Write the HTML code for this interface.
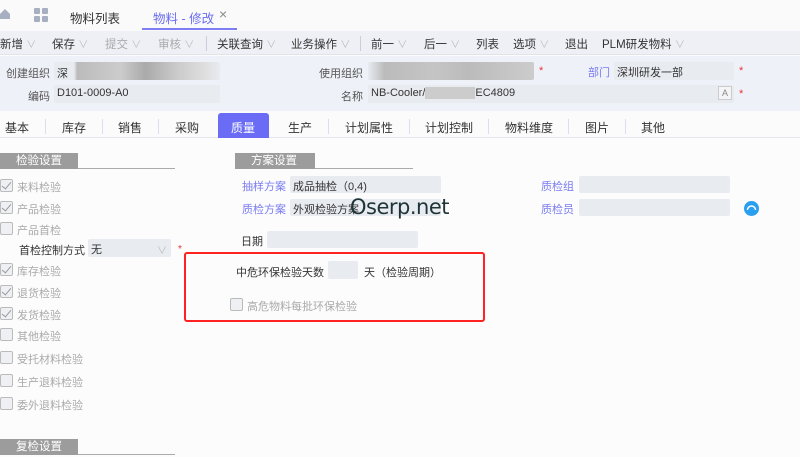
<!DOCTYPE html>
<html><head><meta charset="utf-8"><style>
*{margin:0;padding:0;box-sizing:border-box}
body{width:800px;height:457px;overflow:hidden;background:#fcfcfd;font-family:"Liberation Sans","Noto Sans CJK SC",sans-serif;font-size:11px;color:#333;position:relative}
.a{position:absolute;white-space:nowrap}
.inp{position:absolute;background:#e8ebf0;border-radius:2px}
.ck{position:absolute;width:13px;height:13px;border:1px solid #bbb;border-radius:2px;background:#eef0f4}
.ck.on::after{content:"";position:absolute;left:3px;top:0px;width:4px;height:8px;border:solid #999;border-width:0 1.5px 1.5px 0;transform:rotate(40deg)}
.cl{color:#aaa}
.dv{color:#bbb;font-size:10px}
.tb{font-size:11.5px}
.sec{position:absolute;height:16px;background:#9c9c9c;color:#fff;font-size:11.5px;line-height:16px;padding-left:16px}
.secl{position:absolute;height:1px;background:#aaa}
.tab{position:absolute;top:119px;font-size:12px;color:#333}
.sep{position:absolute;top:119px;width:1px;height:15px;background:#dde}
</style></head><body>
<div class="a" style="left:0;top:0;width:800px;height:31px;background:#fafafb"></div>
<svg class="a" style="left:0;top:8px" width="12" height="12"><path d="M0 6 L5 1 L10 6 V11 H0 Z" fill="#a6b0c0"/></svg>
<svg class="a" style="left:34px;top:8px" width="14" height="14"><rect x="0" y="0" width="6" height="6" rx="1" fill="#a6b0c0"/><rect x="8" y="0" width="6" height="6" rx="1" fill="#a6b0c0"/><rect x="0" y="8" width="6" height="6" rx="1" fill="#a6b0c0"/><rect x="8" y="8" width="6" height="6" rx="1" fill="#a6b0c0"/></svg>
<div class="a" style="left:70px;top:8px;font-size:12.5px;color:#333">物料列表</div>
<div class="a" style="left:153px;top:8px;font-size:12.5px;color:#6a6cf0">物料 - 修改</div>
<div class="a" style="left:219px;top:6px;font-size:14px;color:#888">×</div>
<div class="a" style="left:142px;top:28px;width:95px;height:2px;background:#7c7ef2"></div>
<div class="a" style="left:0;top:31px;width:800px;height:24px;background:#eef0f6;border-bottom:1px solid #e0e3ea"></div>
<div class="a tb" style="left:0;top:36px">新增 <span class="dv">∨</span></div>
<div class="a tb" style="left:52px;top:36px">保存 <span class="dv">∨</span></div>
<div class="a tb" style="left:105px;top:36px;color:#aaa">提交 <span class="dv">∨</span></div>
<div class="a tb" style="left:158px;top:36px;color:#aaa">审核 <span class="dv">∨</span></div>
<div class="a" style="left:206px;top:36px;width:1px;height:15px;background:#ccd"></div>
<div class="a tb" style="left:217px;top:36px">关联查询 <span class="dv">∨</span></div>
<div class="a tb" style="left:291px;top:36px">业务操作 <span class="dv">∨</span></div>
<div class="a" style="left:360px;top:36px;width:1px;height:15px;background:#ccd"></div>
<div class="a tb" style="left:371px;top:36px">前一 <span class="dv">∨</span></div>
<div class="a tb" style="left:424px;top:36px">后一 <span class="dv">∨</span></div>
<div class="a tb" style="left:476px;top:36px">列表</div>
<div class="a tb" style="left:513px;top:36px">选项 <span class="dv">∨</span></div>
<div class="a tb" style="left:565px;top:36px">退出</div>
<div class="a tb" style="left:602px;top:36px">PLM研发物料 <span class="dv">∨</span></div>
<div class="a" style="left:0;top:56px;width:800px;height:55px;background:#eef1f7"></div>
<div class="a" style="left:6px;top:65px;color:#555">创建组织</div>
<div class="inp" style="left:54px;top:62px;width:166px;height:18px;background:linear-gradient(90deg,#e8ebf0 0,#e8ebf0 12%,#bbb 14%,#ccc 40%,#aaa 55%,#ccc 75%,#ddd 90%,#e8ebf0 100%)"></div>
<div class="a" style="left:57px;top:65px">深</div>
<div class="a" style="left:319px;top:65px;color:#555">使用组织</div>
<div class="inp" style="left:368px;top:62px;width:166px;height:18px;background:linear-gradient(90deg,#e8ebf0 0,#bbb 10%,#c5c5c5 40%,#bbb 60%,#ccc 100%)"></div>
<div class="a" style="left:539px;top:65px;color:#e33">*</div>
<div class="a" style="left:588px;top:64px;color:#7a7cf0">部门</div>
<div class="inp" style="left:614px;top:62px;width:120px;height:18px"></div>
<div class="a" style="left:617px;top:64px">深圳研发一部</div>
<div class="a" style="left:739px;top:65px;color:#e33">*</div>
<div class="a" style="left:28px;top:88px;color:#555">编码</div>
<div class="inp" style="left:54px;top:85px;width:166px;height:18px"></div>
<div class="a" style="left:57px;top:87px">D101-0009-A0</div>
<div class="a" style="left:341px;top:88px;color:#555">名称</div>
<div class="inp" style="left:368px;top:85px;width:366px;height:18px"></div>
<div class="a" style="left:371px;top:87px">NB-Cooler/<span style="display:inline-block;width:50px;height:12px;background:#ccc;vertical-align:middle"></span>EC4809</div>
<div class="a" style="left:718px;top:86px;width:14px;height:14px;border:1px solid #ccc;background:#f5f5f7;font-size:9px;text-align:center;line-height:12px;color:#888">A</div>
<div class="a" style="left:739px;top:88px;color:#e33">*</div>
<div class="a" style="left:0;top:111px;width:800px;height:27px;background:#fbfbfc;border-bottom:1px solid #e4e6ec"></div>
<div class="a" style="left:218px;top:113px;width:51px;height:25px;background:#6a6cf5;border-radius:3px 3px 0 0"></div>
<div class="tab" style="left:5px">基本</div><div class="sep" style="left:45px"></div>
<div class="tab" style="left:62px">库存</div><div class="sep" style="left:102px"></div>
<div class="tab" style="left:118px">销售</div><div class="sep" style="left:158px"></div>
<div class="tab" style="left:175px">采购</div>
<div class="tab" style="left:231px;color:#fff">质量</div>
<div class="tab" style="left:288px">生产</div><div class="sep" style="left:328px"></div>
<div class="tab" style="left:345px">计划属性</div><div class="sep" style="left:409px"></div>
<div class="tab" style="left:425px">计划控制</div><div class="sep" style="left:488px"></div>
<div class="tab" style="left:505px">物料维度</div><div class="sep" style="left:568px"></div>
<div class="tab" style="left:585px">图片</div><div class="sep" style="left:625px"></div>
<div class="tab" style="left:641px">其他</div>
<div class="sec" style="left:0;top:153px;width:78px">检验设置</div>
<div class="secl" style="left:78px;top:168px;width:97px"></div>
<div class="ck on" style="left:0;top:179px"></div><div class="a cl" style="left:17px;top:179px">来料检验</div>
<div class="ck on" style="left:0;top:201px"></div><div class="a cl" style="left:17px;top:201px">产品检验</div>
<div class="ck" style="left:0;top:222px"></div><div class="a cl" style="left:17px;top:222px">产品首检</div>
<div class="a" style="left:19px;top:242px">首检控制方式</div>
<div class="inp" style="left:88px;top:239px;width:83px;height:18px"></div>
<div class="a" style="left:91px;top:241px">无</div>
<div class="a dv" style="left:157px;top:242px">∨</div>
<div class="a" style="left:178px;top:244px;color:#e33;font-size:10px">*</div>
<div class="ck on" style="left:0;top:263px"></div><div class="a cl" style="left:17px;top:263px">库存检验</div>
<div class="ck on" style="left:0;top:285px"></div><div class="a cl" style="left:17px;top:285px">退货检验</div>
<div class="ck on" style="left:0;top:307px"></div><div class="a cl" style="left:17px;top:307px">发货检验</div>
<div class="ck" style="left:0;top:328px"></div><div class="a cl" style="left:17px;top:328px">其他检验</div>
<div class="ck" style="left:0;top:351px"></div><div class="a cl" style="left:17px;top:351px">受托材料检验</div>
<div class="ck" style="left:0;top:374px"></div><div class="a cl" style="left:17px;top:374px">生产退料检验</div>
<div class="ck" style="left:0;top:397px"></div><div class="a cl" style="left:17px;top:397px">委外退料检验</div>
<div class="sec" style="left:0;top:439px;width:78px">复检设置</div>
<div class="secl" style="left:78px;top:454px;width:97px"></div>
<div class="sec" style="left:235px;top:153px;width:80px">方案设置</div>
<div class="secl" style="left:315px;top:168px;width:98px"></div>
<div class="a" style="left:242px;top:178px;color:#7a7cf0">抽样方案</div>
<div class="inp" style="left:290px;top:176px;width:151px;height:17px"></div>
<div class="a" style="left:293px;top:178px">成品抽检（0,4)</div>
<div class="a" style="left:242px;top:201px;color:#7a7cf0">质检方案</div>
<div class="inp" style="left:290px;top:199px;width:151px;height:17px"></div>
<div class="a" style="left:293px;top:201px">外观检验方案</div>
<div class="a" style="left:350px;top:195px;font-size:21px;color:#1f3438;font-family:'DejaVu Sans',sans-serif;letter-spacing:-0.5px">Oserp.net</div>
<div class="a" style="left:541px;top:178px;color:#7a7cf0">质检组</div>
<div class="inp" style="left:579px;top:176px;width:151px;height:17px"></div>
<div class="a" style="left:541px;top:201px;color:#7a7cf0">质检员</div>
<div class="inp" style="left:579px;top:199px;width:151px;height:17px"></div>
<div class="a" style="left:744px;top:201px;width:15px;height:15px;border-radius:50%;background:#2a9ef0"></div>
<svg class="a" style="left:746px;top:203px" width="11" height="11"><path d="M1.5 7 A4 4 0 0 1 9.5 7" stroke="#fff" stroke-width="1.5" fill="none"/></svg>
<div class="a" style="left:241px;top:233px">日期</div>
<div class="inp" style="left:267px;top:231px;width:151px;height:17px"></div>
<div class="a" style="left:184px;top:252px;width:301px;height:70px;border:2px solid #f22;border-radius:3px"></div>
<div class="a" style="left:236px;top:264px">中危环保检验天数</div>
<div class="inp" style="left:328px;top:261px;width:30px;height:18px"></div>
<div class="a" style="left:364px;top:264px">天（检验周期）</div>
<div class="ck" style="left:230px;top:298px"></div>
<div class="a cl" style="left:247px;top:298px">高危物料每批环保检验</div>
</body></html>
